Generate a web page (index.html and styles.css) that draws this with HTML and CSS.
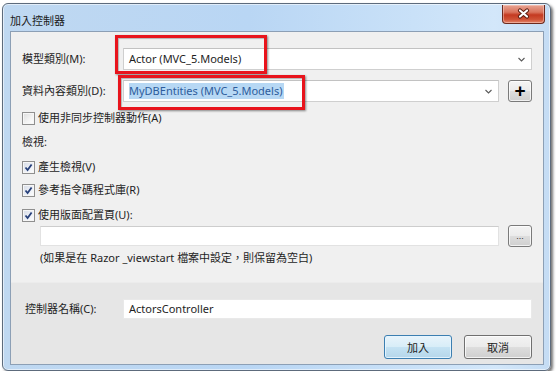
FILE: index.html
```html
<!DOCTYPE html>
<html lang="zh-Hant">
<head>
<meta charset="UTF-8">
<meta name="viewport" content="width=device-width, initial-scale=1.0">
<title>加入控制器</title>
<link rel="stylesheet" href="styles.css">
</head>

<body>
<div class="window">
    <div class="titlebar">
        <span class="title">加入控制器</span>
        <button class="close-button">
            <svg width="43" height="19" viewBox="0 0 43 19">
                <path d="M18 9.5 L25 15.5 M25 9.5 L18 15.5" transform="translate(0 -3)" stroke="#5a1c10" stroke-width="4.2" stroke-linecap="round"/>
                <path d="M18 9.5 L25 15.5 M25 9.5 L18 15.5" transform="translate(0 -3)" stroke="#ffffff" stroke-width="2.2" stroke-linecap="round"/>
            </svg>
        </button>
    </div>

    <div class="client">
        <div class="main">
            <div class="field-row">
                <label class="field-label">模型類別(M):</label>
                <div class="combo">
                    <span class="combo-text">Actor (MVC_5.Models)</span>
                    <svg class="arrow" width="7" height="5" viewBox="0 0 7 5"><path d="M0.5 1 L3.5 4 L6.5 1" fill="none" stroke="#5a5a5a" stroke-width="1.1"/></svg>
                </div>
            </div>
            <div class="field-row second-row">
                <label class="field-label">資料內容類別(D):</label>
                <div class="combo">
                    <span class="combo-text selected">MyDBEntities (MVC_5.Models)</span>
                    <svg class="arrow" width="7" height="5" viewBox="0 0 7 5"><path d="M0.5 1 L3.5 4 L6.5 1" fill="none" stroke="#5a5a5a" stroke-width="1.1"/></svg>
                </div>
                <button class="small-button plus">+</button>
            </div>

            <label class="check check-async"><span class="box"></span>使用非同步控制器動作(A)</label>
            <div class="group-label">檢視:</div>
            <label class="check check-views"><span class="box checked"><svg width="9" height="9" viewBox="0 0 9 9"><path d="M1.5 4.5 L3.6 7 L7.6 1.5" fill="none" stroke="#27407a" stroke-width="1.8"/></svg></span>產生檢視(V)</label>
            <label class="check check-scripts"><span class="box checked"><svg width="9" height="9" viewBox="0 0 9 9"><path d="M1.5 4.5 L3.6 7 L7.6 1.5" fill="none" stroke="#27407a" stroke-width="1.8"/></svg></span>參考指令碼程式庫(R)</label>
            <label class="check check-layout"><span class="box checked"><svg width="9" height="9" viewBox="0 0 9 9"><path d="M1.5 4.5 L3.6 7 L7.6 1.5" fill="none" stroke="#27407a" stroke-width="1.8"/></svg></span>使用版面配置頁(U):</label>

            <div class="layout-row">
                <div class="textbox"></div>
                <button class="small-button dots">...</button>
            </div>
            <div class="note">(如果是在 Razor _viewstart 檔案中設定，則保留為空白)</div>
        </div>

        <div class="footer">
            <div class="field-row">
                <label class="field-label name-label">控制器名稱(C):</label>
                <div class="textbox name-box">ActorsController</div>
            </div>
            <div class="buttons">
                <button class="dialog-button default">加入</button>
                <button class="dialog-button">取消</button>
            </div>
        </div>
    </div>

    <div class="marker marker-model"></div>
    <div class="marker marker-context"></div>
</div>
</body>
</html>
```

FILE: styles.css
```css
body {
    margin: 0;
    padding: 0;
    background: #ffffff;
    font-family: "Noto Sans", "Noto Sans CJK TC", sans-serif;
    font-size: 11px;
    color: #1e1e1e;
}
.window {
    position: relative;
    box-sizing: border-box;
    margin: 3px 0 0 2px;
    width: 549px;
    height: 368px;
    border: 1px solid #5d6b7c;
    border-radius: 6px;
    background: linear-gradient(to right, #bfd8f1 0%, #b9d6f4 45%, #c9e1f8 75%, #d3e7fa 90%, #c4dcf4 100%);
    box-shadow: inset 0 0 0 1px rgba(255, 255, 255, 0.55), 2px 2px 3px rgba(0, 0, 0, 0.55);
}
.titlebar {
    display: flex;
    justify-content: space-between;
    height: 27px;
    padding-left: 7px;
    padding-right: 5px;
}
.title {
    padding-top: 9px;
    font-family: "Noto Sans CJK TC", sans-serif;
    font-size: 11px;
    line-height: 14px;
    color: #1a1a1a;
}
.close-button {
    width: 43px;
    height: 19px;
    margin-top: 1px;
    padding: 0;
    border: 1px solid #6c2a1e;
    border-top: none;
    border-radius: 0 0 4px 4px;
    background: linear-gradient(to bottom, #e8a493 0%, #d9735c 40%, #c43a21 55%, #cf5236 80%, #e3866b 100%);
    box-shadow: inset 0 0 0 1px rgba(255, 220, 210, 0.45);
}
.close-button svg {
    display: block;
    margin: -1px 0 0 -1px;
}
.client {
    box-sizing: border-box;
    width: 534px;
    height: 334px;
    margin-left: 7px;
    border: 1px solid #8c9fb5;
    display: flex;
    flex-direction: column;
}
.main {
    height: 250px;
    box-sizing: border-box;
    padding: 16px 11px 0 11px;
    background: #f0f0f0;
}
.field-row {
    display: flex;
    align-items: center;
    height: 22px;
}
.second-row {
    margin-top: 10px;
}
.field-label {
    width: 101px;
    flex-shrink: 0;
    line-height: 16px;
}
.combo {
    flex: 1;
    box-sizing: border-box;
    height: 22px;
    display: flex;
    align-items: center;
    justify-content: space-between;
    padding: 0 5px 0 5px;
    background: #ffffff;
    border: 1px solid #cfcfcf;
    border-top-color: #c2c2c2;
}
.combo-text {
    line-height: 16px;
}
.selected {
    background: #b7d8f4;
    color: #2c5c9c;
    padding-right: 2px;
}
.arrow {
    margin-right: 1px;
}
.small-button {
    box-sizing: border-box;
    flex-shrink: 0;
    width: 24px;
    height: 22px;
    margin-left: 9px;
    padding: 0;
    border: 1px solid #7a7a7a;
    border-radius: 3px;
    background: linear-gradient(to bottom, #f4f4f4 0%, #ebebeb 48%, #dddddd 52%, #cfcfcf 100%);
    box-shadow: inset 0 0 0 1px rgba(255, 255, 255, 0.7);
    color: #000000;
    font-family: "Liberation Sans", sans-serif;
}
.plus {
    font-size: 19px;
    font-weight: bold;
    line-height: 18px;
}
.dots {
    font-size: 9px;
    line-height: 12px;
    color: #333333;
}
.check {
    display: flex;
    align-items: center;
    height: 16px;
    line-height: 16px;
}
.check-async {
    margin-top: 8px;
}
.check-views {
    margin-top: 9px;
}
.check-scripts {
    margin-top: 7px;
}
.check-layout {
    margin-top: 9px;
}
.box {
    box-sizing: border-box;
    width: 13px;
    height: 13px;
    margin-right: 3px;
    border: 1px solid #8f8f8f;
    background: linear-gradient(135deg, #dcdcdc 0%, #f4f4f4 60%, #ffffff 100%);
    box-shadow: inset 0 0 0 1px #f6f6f6;
    display: flex;
    align-items: center;
    justify-content: center;
}
.box.checked {
    background: linear-gradient(135deg, #d6dbe6 0%, #eef1f7 60%, #ffffff 100%);
}
.group-label {
    margin-top: 8px;
    height: 16px;
    line-height: 16px;
}
.layout-row {
    display: flex;
    align-items: center;
    height: 22px;
    margin-top: 2px;
    padding-left: 18px;
}
.textbox {
    flex: 1;
    box-sizing: border-box;
    height: 20px;
    background: #ffffff;
    border: 1px solid #e2e2e2;
    border-top-color: #cdcdcd;
}
.note {
    margin-top: 3px;
    padding-left: 18px;
    height: 16px;
    line-height: 16px;
}
.footer {
    flex: 1;
    box-sizing: border-box;
    padding: 16px 11px 0 11px;
    background: #e6e6e6;
    border-top: 1px solid #ececec;
}
.footer .field-row {
    height: 20px;
}
.name-label {
    padding-left: 3px;
    width: 98px;
}
.name-box {
    padding-left: 5px;
    line-height: 18px;
    border-color: #e9e9e9;
}
.buttons {
    display: flex;
    justify-content: flex-end;
    gap: 12px;
    margin-top: 16px;
}
.dialog-button {
    box-sizing: border-box;
    width: 68px;
    height: 24px;
    padding: 0;
    border: 1px solid #707070;
    border-radius: 3px;
    background: linear-gradient(to bottom, #f3f3f3 0%, #ebebeb 48%, #dddddd 52%, #cfcfcf 100%);
    box-shadow: inset 0 0 0 1px rgba(255, 255, 255, 0.75);
    font-family: "Noto Sans CJK TC", sans-serif;
    font-size: 11px;
    color: #222222;
}
.dialog-button.default {
    border-color: #3c7fb1;
    background: linear-gradient(to bottom, #e8f4fb 0%, #d8edf8 48%, #c4e2f3 52%, #b5d6ea 100%);
    box-shadow: inset 0 0 0 1px rgba(230, 245, 255, 0.9);
}
.marker {
    position: absolute;
    box-sizing: border-box;
    border: 3px solid #e8141c;
    box-shadow: 1px 1px 2px rgba(0, 0, 0, 0.45), inset 1px 1px 1px rgba(0, 0, 0, 0.25);
}
.marker-model {
    left: 112px;
    top: 31px;
    width: 152px;
    height: 39px;
}
.marker-context {
    left: 115px;
    top: 71px;
    width: 187px;
    height: 35px;
}
```
